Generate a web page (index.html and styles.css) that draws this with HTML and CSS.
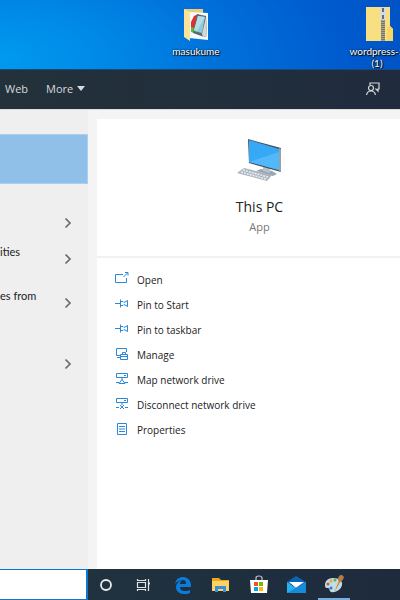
FILE: index.html
```html
<!DOCTYPE html>
<html lang="en">
<head>
<meta charset="utf-8">
<title>Desktop search</title>
<link rel="stylesheet" href="styles.css">
</head>
<body>
<svg class="defs" aria-hidden="true">
  <symbol id="chevron" viewBox="0 0 8 12"><path d="M1.500 1.500 6 6 1.500 10.500" fill="none" stroke="#6b6b6b" stroke-width="1.700"/></symbol>
  <symbol id="pin" viewBox="0 0 14 12"><path d="M0 5.500H5M5.500 1.500V9.500M5.500 3.500H8L9 4.500 12.500 2.500V8.500L9 6.500 8 7.500H5.500" fill="none" stroke="currentColor"/></symbol>
  <symbol id="drive" viewBox="0 0 14 14"><path d="M1.500 1.500H12.500V5.500H1.500ZM9 3.500H11M7 6V8M1 10.500H4M10 10.500H13" fill="none" stroke="currentColor"/></symbol>
</svg>
<section class="desktop" aria-label="Desktop">
  <a class="shortcut" href="#">
    <svg width="28" height="34" viewBox="0 0 28 34">
      <path d="M2 2H21V30H7L2 27Z" fill="#e9cd7c"/>
      <path d="M7 5 26 6V33L7 31Z" fill="#f8fafb"/>
      <path d="m12 9 4-2-3 17-4-1V15Z" fill="#df3030"/><path d="m9 20 4 1-1 5-3-1Z" fill="#58bd32"/>
      <path d="m15 7 9 2 1 20-3 1-11-4Z" fill="#596b72"/>
      <path d="m16 9 7 1-3 16-8-2Z" fill="#8fcbd8"/><path d="m16 9 7 1-8 14-3-1Z" fill="#b4dde4"/>
      <path d="m24 10 1 19-4 1-1-3Z" fill="#d1d9da"/>
      <path d="M2 2 8 5V34L2 30Z" fill="#fbe39c"/>
    </svg>
    <span>masukume</span>
  </a>
  <a class="shortcut" href="#">
    <svg width="32" height="34" viewBox="-4 0 32 34">
      <path d="M1 0H25V19L28 22V34H1Z" fill="#f8df82"/><path d="M22 21 25 19 28 22V34H22Z" fill="#fbd660"/>
      <path d="M16 0H20V34H16Z" fill="#a3a092"/>
      <path d="M18 12V34" stroke="#77796e" stroke-width="4" stroke-dasharray="1 1"/>
      <rect x="15" y="0" width="6" height="13" rx="2" fill="#d7dbde"/><path d="M17 1H19V5H17ZM17 8H19V12H17Z" fill="#666d73"/>
    </svg>
    <span>wordpress-5<br>(1)</span>
  </a>
</section>
<nav class="tabs" aria-label="Search scope">
  <button>Web</button>
  <button>More <svg width="8" height="5" viewBox="0 0 8 5"><path d="M0 0H8L4 5Z" fill="currentColor"/></svg></button>
  <button class="feedback" aria-label="Feedback">
    <svg width="14" height="14" viewBox="0 0 14 14" fill="none" stroke="currentColor" stroke-width="1.200"><path d="M4 3V1H13V7H12V9L10 7H9"/><circle cx="5" cy="6" r="2.500"/><path d="M.6 13C1 10 2.500 9 5 9S9 10 9.400 13"/></svg>
  </button>
</nav>
<main class="search">
  <section class="results" aria-label="Results">
    <button class="selected" aria-label="This PC"></button>
    <ul>
      <li><span></span><svg class="chev"><use href="#chevron"/></svg></li>
      <li><span>ities</span><svg class="chev"><use href="#chevron"/></svg></li>
      <li class="tall"><span>es from</span><svg class="chev"><use href="#chevron"/></svg></li>
      <li class="last"><span></span><svg class="chev"><use href="#chevron"/></svg></li>
    </ul>
  </section>
  <article class="card">
    <header>
      <svg width="46" height="44" viewBox="0 0 46 44">
        <path d="m24 31 11 2 5 3-4 2-17-5Z" fill="#9aa6af"/><path d="m26 28 7 2v5l-7-2Z" fill="#b9c2c8"/>
        <path d="m11 1 33 9v24L12 25Z" fill="#46515b"/><path d="m12 2 30 9v21L12 24Z" fill="#36a8f6"/><path d="m12 24 30-10v18Z" fill="#51b9fb"/><path d="m42 10 2 1v23l-2-1Z" fill="#96a1a8"/>
        <path d="M7 30 35 37 30 43 0 35Z" fill="#a9b5be"/>
        <path d="m6 32 25 7M4 34l25 7" stroke="#eef2f5" stroke-width="1.500" stroke-dasharray="2 1"/>
      </svg>
      <h1>This PC</h1>
      <p>App</p>
    </header>
    <div class="actions">
      <button><svg viewBox="0 0 14 14"><path d="M8 2.500H.5V10.500H11.500V6M8.500 5 12.500 1M10 .5H13V3.500" fill="none" stroke="currentColor"/></svg>Open</button>
      <button><svg viewBox="0 0 14 12"><use href="#pin"/></svg>Pin to Start</button>
      <button><svg viewBox="0 0 14 12"><use href="#pin"/></svg>Pin to taskbar</button>
      <button><svg viewBox="0 0 14 14"><path d="M5 8.500H1.500V1.500H11.500V5M2 10.500H5M5.500 7.500H12.500V12.500H5.500ZM7.500 7V5.500H10.500V7M5.500 9.500H12.500" fill="none" stroke="currentColor"/></svg>Manage</button>
      <button><svg viewBox="0 0 14 14"><use href="#drive"/><path d="m4 11.500 3-4 3 4Z" fill="#fff" stroke="currentColor"/></svg>Map network drive</button>
      <button><svg viewBox="0 0 14 14"><use href="#drive"/><path d="m5 8 4 4M9 8l-4 4" stroke="currentColor"/></svg>Disconnect network drive</button>
      <button><svg viewBox="0 0 14 14"><path d="M2.500 1.500H11.500V12.500H2.500ZM4 4.500H10M4 7H10M4 9.500H10" fill="none" stroke="currentColor"/></svg>Properties</button>
    </div>
  </article>
</main>
<footer class="taskbar">
  <input type="text" aria-label="Search">
  <div class="apps">
    <button aria-label="Cortana"><svg viewBox="0 0 20 20"><circle cx="10" cy="10" r="5" fill="none" stroke="#e8ecee" stroke-width="1.800"/></svg></button>
    <button aria-label="Task view"><svg viewBox="0 0 20 20" fill="none" stroke="#dce2e5" stroke-width="1.200"><path d="M3.500 4V5.500H11.500V4M3.500 16V14.500H11.500V16M3.500 7.500H11.500V12.500H3.500ZM14.500 4V16"/><path d="M14 8.500H16" stroke-width="2"/></svg></button>
    <button aria-label="Edge"><svg viewBox="0 0 20 20"><path d="M3 9C4 4 7 2 11 2c5 0 8 4 8 8v2H8c0 3 2 4 5 4 2 0 3 0 5-1v3c-2 1-4 1-6 1-5 0-8-3-8-7 0-3 2-5 5-7-3 1-5 2-6 4ZM8 9h6c0-3-1-4-3-4-2 0-3 2-3 4Z" fill="#0b7cdd" fill-rule="evenodd"/></svg></button>
    <button aria-label="File Explorer"><svg viewBox="0 0 20 20"><path d="M2 3H9L11 5H19V16H2Z" fill="#e8a91d"/><path d="M2 6H19V16H2Z" fill="#fbd365"/><path d="M5 17V11H16V17H13V14H8V17Z" fill="#398fda"/></svg></button>
    <button aria-label="Store"><svg viewBox="0 0 20 20"><path d="M8 6V3Q8 1 11 1T14 3V6" fill="none" stroke="#bfc8cd" stroke-width="1.200"/><path d="M2 5H20L19 18H3Z" fill="#fff"/><path d="M6 7H10V11H6Z" fill="#f15323"/><path d="M11 7H15V11H11Z" fill="#77b900"/><path d="M6 12H10V16H6Z" fill="#00a3ee"/><path d="M11 12H15V16H11Z" fill="#ffb900"/></svg></button>
    <button aria-label="Mail"><svg viewBox="0 0 20 20"><path d="M1 7 10 1 20 7V9H1Z" fill="#0964b5"/><path d="M3 7H18L10 13Z" fill="#fff"/><path d="m1 7 9 6 10-6V18H1Z" fill="#28b1f1"/><path d="M1 18 20 7V18Z" fill="#168bd9"/></svg></button>
    <button class="active" aria-label="Paint"><svg viewBox="0 0 20 20"><path d="M9 4C4 4 1 7 1 11c0 3 1 3 3 3 2 0 1 3 3 4 4 1 10-2 11-7 1-4-3-7-9-7Z" fill="#bddeea"/><circle cx="4" cy="10" r="1.500" fill="#e24c3b"/><circle cx="7" cy="7" r="1.500" fill="#f4a628"/><circle cx="11" cy="6" r="1.500" fill="#66b345"/><circle cx="7" cy="14" r="1.500" fill="#3977c4"/><path d="m10 19 5-13 2 1Z" fill="#e38b32"/><path d="M14 6c0-3 1-5 4-5l2 2c-1 3-2 4-4 5Z" fill="#b77c45"/></svg></button>
  </div>
</footer>
</body>
</html>
```
FILE: styles.css
```css
* { box-sizing: border-box; }
body {
  margin: 0;
  min-height: 100vh;
  display: grid;
  grid-template-columns: minmax(0, 1fr);
  grid-template-rows: 69px 40px 1fr 31px;
  font: 11px/16px "Open Sans", "Noto Sans", sans-serif;
  color: #222;
  overflow-x: hidden;
}
button { font: inherit; color: inherit; border: 0; padding: 0; background: none; }
svg { flex: none; }
.defs { position: absolute; width: 0; height: 0; }

.desktop {
  display: flex;
  gap: 101px;
  padding: 7px 0 0 39%;
  overflow: hidden;
  background: radial-gradient(ellipse 440px 220px at 0 60px, #009af0 0%, #0088e6 25%, #0071da 50%, #005bce 78%, #0050c1 100%);
}
.shortcut {
  flex: none;
  width: 80px;
  display: flex;
  flex-direction: column;
  align-items: center;
  gap: 4px;
  color: #fff;
  font-family: Lato, "Open Sans", sans-serif;
  font-size: 10px;
  line-height: 12px;
  text-align: center;
  text-decoration: none;
  white-space: nowrap;
  text-shadow: 1px 1px 1px #000, 0 0 2px #000;
}

.tabs {
  display: flex;
  align-items: center;
  gap: 18px;
  padding: 0 20px 2px 5px;
  color: #d6dadd;
  background: linear-gradient(90deg, #23313a, #202c3e);
  border-top: 1px solid #184a78;
}
.tabs button:nth-child(2) { display: flex; align-items: center; gap: 4px; }
.tabs .feedback { margin-left: auto; height: 14px; }

.search { display: grid; grid-template-columns: 88px minmax(0, 1fr); background: #f4f4f4; border-top: 1px solid #ddd; }
.results { padding-top: 24px; background: #efefef; overflow: hidden; font-family: Lato, "Open Sans", sans-serif; }
.selected { display: block; width: 100%; height: 50px; background: #90bfe7; border: 1px solid #a9d0ee; border-left: 0; }
.results ul { list-style: none; margin: 21px 0 0; padding: 0; }
.results li { display: flex; align-items: center; justify-content: space-between; height: 36px; padding-right: 16px; white-space: nowrap; }
.results span { height: 30px; }
.results .tall { height: 52px; }
.results .last { height: 36px; margin-top: 17px; }
.chev { width: 8px; height: 12px; }

.card { margin: 9px 0 0 9px; background: #fff; }
.card header {
  display: flex;
  flex-direction: column;
  align-items: center;
  height: 139px;
  padding: 19px 0 0 22px;
  border-bottom: 2px solid #f1f1f1;
}
h1 { margin: 15px 0 0; font-size: 14px; line-height: 20px; font-weight: 400; }
.card p { margin: 2px 0 0; color: #777; }
.actions { display: flex; flex-direction: column; align-items: flex-start; padding: 9px 18px; font-size: 10px; }
.actions button { display: flex; align-items: center; gap: 8px; height: 25px; white-space: nowrap; }
.actions svg { width: 14px; height: 14px; color: #2b88d8; margin-bottom: 2px; }

.taskbar { display: grid; grid-template-columns: 88px minmax(0, 1fr); background: linear-gradient(90deg, #20343f, #1e2b3d); }
.taskbar input { width: 100%; min-width: 0; height: 31px; border: solid #0d77d0; border-width: 1px 2px 1px 0; background: #fff; outline: 0; }
.apps { display: flex; gap: 6px; padding-left: 2px; overflow: hidden; }
.apps button { flex: none; width: 32px; height: 31px; display: grid; place-items: center; }
.apps svg { width: 20px; height: 20px; }
.apps .active { border-bottom: 2px solid #76b0e0; }
```
